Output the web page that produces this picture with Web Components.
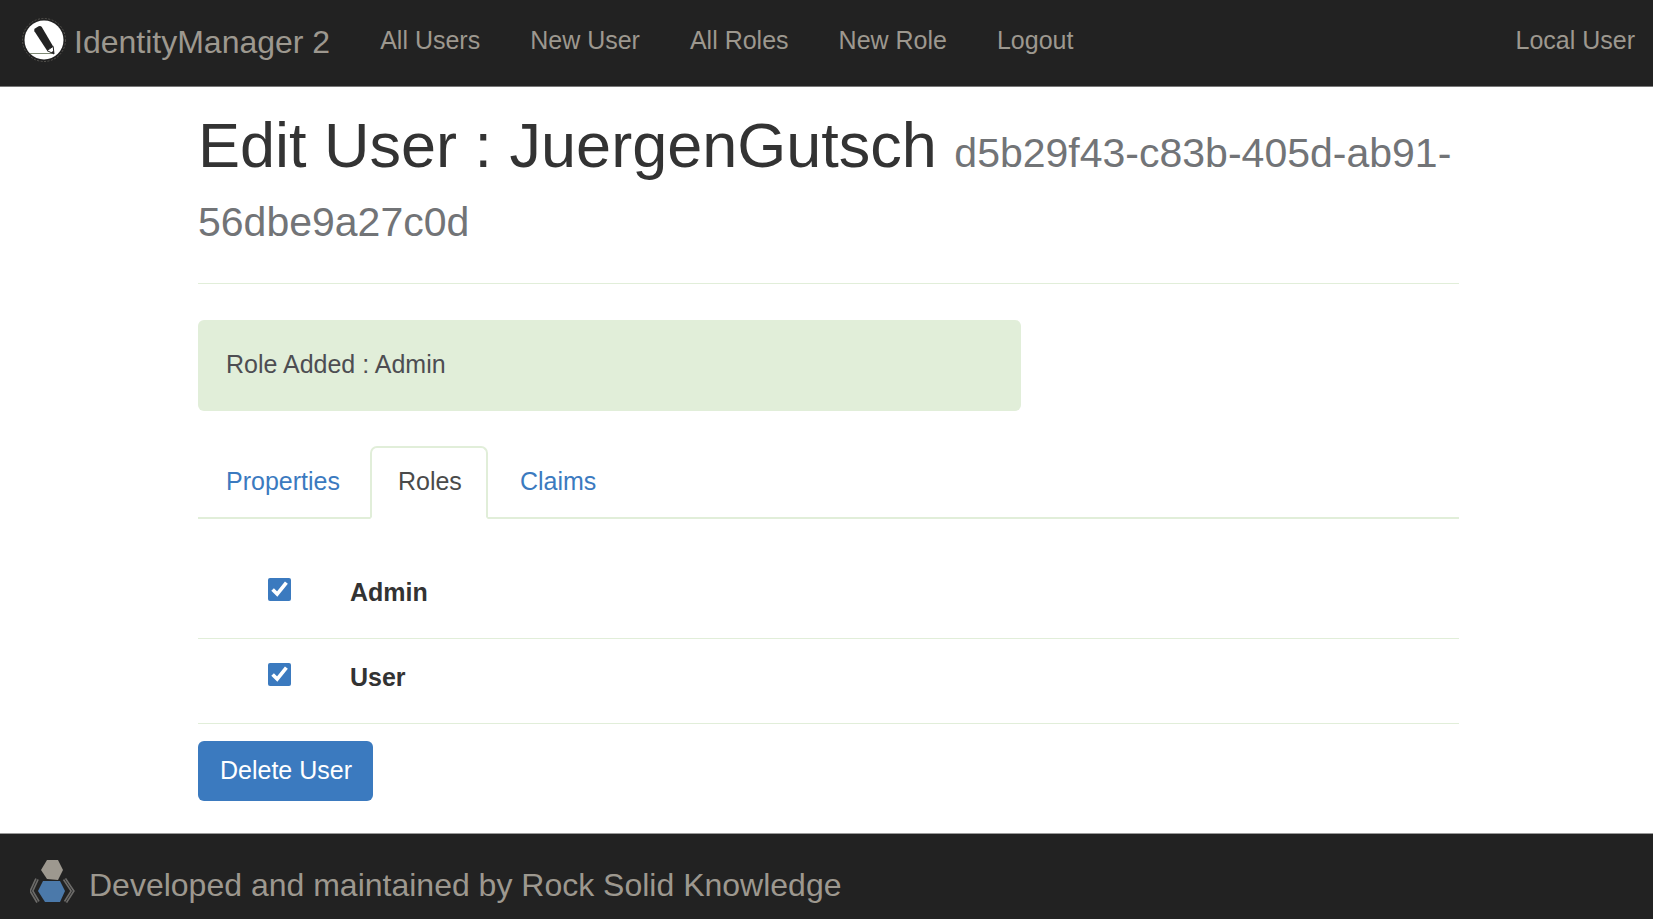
<!DOCTYPE html>
<html lang="en">
<head>
<meta charset="utf-8">
<meta name="viewport" content="width=device-width, initial-scale=1">
<title>IdentityManager 2</title>
<style>
  :root {
    --dark: #222;
    --muted: #9d988f;
    --blue: #3b7abf;
    --line: #e1eed9;
  }
  body {
    margin: 0;
    font: 25px/36px "Liberation Sans", Arial, sans-serif;
    color: #333;
    background: #fff;
  }
</style>
</head>
<body>
<identity-app></identity-app>

<script>
function define(name, html) {
  const template = document.createElement('template');
  template.innerHTML = html;
  customElements.define(name, class extends HTMLElement {
    constructor() {
      super();
      this.attachShadow({ mode: 'open' }).append(template.content.cloneNode(true));
    }
  });
}

define('pencil-logo', `
  <style>:host { display: block; } svg { display: block; width: 44px; height: 44px; }</style>
  <svg viewBox="0 0 44 44" aria-hidden="true">
    <circle cx="22" cy="22" r="21.5" fill="none" stroke="#55534f" stroke-dasharray="2 1.5"/>
    <circle cx="22" cy="22" r="19.5" fill="#fff"/>
    <path d="M8 35.500H30" stroke="#7f8a75"/>
    <path d="M12.4 13.2Q11.6 11.600 13 10.400L16.600 8.200Q18.600 7.400 19.800 9L31.200 28.400L25 32.600Z" fill="#222"/>
    <path d="M25 32.600L31.200 28.400L32 36Z" fill="#fff" stroke="#222"/>
    <path d="M29 34.400L31.800 32.600L32 36Z" fill="#222"/>
  </svg>`);

define('rock-logo', `
  <style>:host { display: block; } svg { display: block; width: 46px; height: 46px; }</style>
  <svg viewBox="0 0 46 46" aria-hidden="true">
    <path d="M17 1H28L33 11L28 21L17 20L11 11Z" fill="#9d988f"/>
    <path d="M13 22H30L35 32L30 43H15L8 32Z" fill="#4b79aa"/>
    <path d="M7 20L1.500 32L8 43M34.500 20L42.500 32L35.500 43" fill="none" stroke="#6c6b69" stroke-width="4"/>
    <path d="M7 20L1.500 32L8 43M34.500 20L42.500 32L35.500 43" fill="none" stroke="#333"/>
  </svg>`);

define('top-bar', `
  <style>
    :host { display: block; background: var(--dark); border-bottom: 1px solid #777; color: var(--muted); }
    nav { display: flex; align-items: center; min-height: 86px; padding: 0 18px 6px 22px; box-sizing: border-box; }
    .brand { display: flex; align-items: center; gap: 8px; padding-right: 50px; font-size: 32px; line-height: 36px; }
    .brand span { padding-top: 4px; }
    ul { display: flex; flex: 1; gap: 50px; margin: 0; padding: 0; list-style: none; }
    .user { margin-left: auto; }
    a { color: inherit; text-decoration: none; white-space: nowrap; }
  </style>
  <nav aria-label="Main">
    <a class="brand" href="#"><pencil-logo></pencil-logo><span>IdentityManager 2</span></a>
    <ul>
      <li><a href="#">All Users</a></li>
      <li><a href="#">New User</a></li>
      <li><a href="#">All Roles</a></li>
      <li><a href="#">New Role</a></li>
      <li><a href="#">Logout</a></li>
      <li class="user"><a href="#">Local User</a></li>
    </ul>
  </nav>`);

define('page-header', `
  <style>
    :host { display: block; padding-bottom: 34px; border-bottom: 1px solid var(--line); }
    h1 { margin: 0; font-size: 63px; line-height: 69px; font-weight: 400; }
    .id { font-size: 41px; line-height: 1; color: #727477; }
  </style>
  <h1><slot></slot> <span class="id"><slot name="id"></slot></span></h1>`);

define('success-alert', `
  <style>
    :host { display: block; width: calc((100% + 52px) * 2 / 3 - 52px); box-sizing: border-box;
      padding: 26px 28px 29px; border-radius: 6px; background: var(--line); color: #4d4d52; }
  </style>
  <div role="status"><slot></slot></div>`);

define('tab-bar', `
  <style>
    :host { display: block; border-bottom: 2px solid var(--line); }
    nav { display: flex; gap: 4px; margin-bottom: -2px; }
    a { padding: 15px 24px 18px 26px; border: 2px solid transparent; border-radius: 7px 7px 0 0;
      color: var(--blue); text-decoration: none; }
    a[aria-current] { color: #4a4a4a; border-color: var(--line); border-bottom-color: #fff; background: #fff; }
  </style>
  <nav aria-label="User sections">
    <a href="#">Properties</a>
    <a href="#" aria-current="page">Roles</a>
    <a href="#">Claims</a>
  </nav>`);

define('role-row', `
  <style>
    :host { display: block; border-bottom: 1px solid var(--line); }
    div { display: flex; align-items: flex-start; gap: 59px; padding: 20px 0 28px 70px; }
    input { width: 23px; height: 23px; margin: 4px 0 0; accent-color: var(--blue); }
    label { font-weight: 700; }
  </style>
  <div><input type="checkbox" id="role" checked><label for="role"><slot></slot></label></div>`);

define('delete-button', `
  <style>
    :host { display: block; }
    button { font: inherit; color: #fff; background: var(--blue); border: 0; border-radius: 6px; padding: 11px 21px 13px 22px; }
  </style>
  <button type="button"><slot></slot></button>`);

define('page-footer', `
  <style>
    :host { display: block; flex: 1; background: var(--dark); border-top: 1px solid #999; color: var(--muted);
      font-size: 32px; line-height: 36px; }
    footer { display: flex; align-items: center; gap: 13px; padding: 25px 30px 14px; }
    span { padding-top: 6px; }
  </style>
  <footer><rock-logo></rock-logo><span>Developed and maintained by Rock Solid Knowledge</span></footer>`);

define('identity-app', `
  <style>
    :host { display: flex; flex-direction: column; min-height: 100vh; }
    main { box-sizing: border-box; width: 100%; max-width: 1313px; margin: 0 auto; padding: 24px 24px 32px 28px; }
    success-alert { margin: 36px 0 35px; }
    section { padding: 35px 0 17px; }
  </style>
  <top-bar></top-bar>
  <main>
    <page-header>Edit User : JuergenGutsch<span slot="id">d5b29f43-c83b-405d-ab91-<wbr>56dbe9a27c0d</span></page-header>
    <success-alert>Role Added : Admin</success-alert>
    <tab-bar></tab-bar>
    <section aria-label="Roles">
      <role-row>Admin</role-row>
      <role-row>User</role-row>
    </section>
    <delete-button>Delete User</delete-button>
  </main>
  <page-footer></page-footer>`);
</script>
</body>
</html>
